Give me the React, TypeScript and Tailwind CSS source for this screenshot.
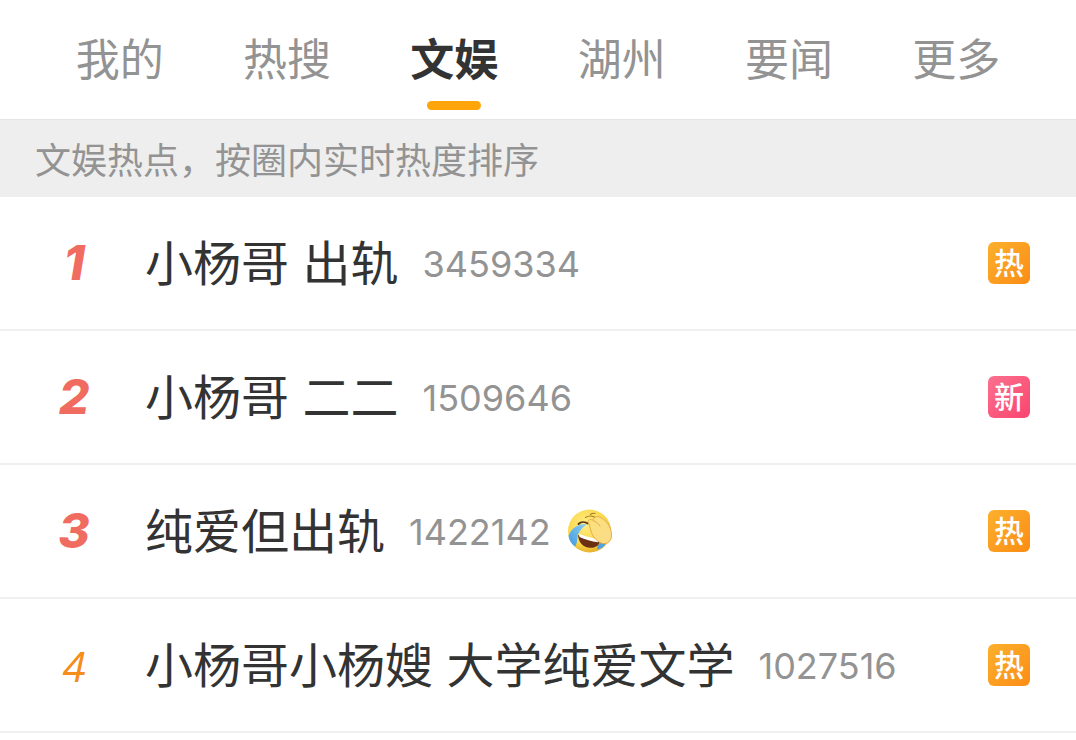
import { useState } from 'react'
import clsx from 'clsx'

type Tag = '热' | '新'

interface HotItem {
  title: string
  count: number
  tag: Tag
  emoji?: boolean
}

const TABS = ['我的', '热搜', '文娱', '湖州', '要闻', '更多']

const ITEMS: HotItem[] = [
  { title: '小杨哥 出轨', count: 3459334, tag: '热' },
  { title: '小杨哥 二二', count: 1509646, tag: '新' },
  { title: '纯爱但出轨', count: 1422142, tag: '热', emoji: true },
  { title: '小杨哥小杨嫂 大学纯爱文学', count: 1027516, tag: '热' },
]

const TAG_STYLES: Record<Tag, string> = {
  热: 'from-[#fbb02c] to-[#fb8c14]',
  新: 'from-[#fb6f8e] to-[#f9436f]',
}

// Laughing and crying face with a hand over one eye
function FacepalmEmoji() {
  return (
    <svg className="size-[46px] shrink-0" viewBox="0 0 46 46" fill="none" role="img" aria-label="笑cry">
      <defs>
        <radialGradient id="face" cx="0.42" cy="0.35" r="0.65">
          <stop offset="0" stopColor="#ffec85" />
          <stop offset="0.7" stopColor="#fbd84a" />
          <stop offset="1" stopColor="#e9b22e" />
        </radialGradient>
        <linearGradient id="hand" x1="0" y1="0" x2="1" y2="1">
          <stop offset="0" stopColor="#fde07a" />
          <stop offset="1" stopColor="#f9dc88" />
        </linearGradient>
        <linearGradient id="tear" x1="1" y1="0" x2="0" y2="1">
          <stop offset="0" stopColor="#8fd0f5" />
          <stop offset="1" stopColor="#3f9ade" />
        </linearGradient>
      </defs>
      <circle cx="22.500" cy="23" r="21.500" fill="url(#face)" />
      <path d="M11.500 16c2.500-2.500 6.500-2.500 9.500-.5" stroke="#5b3410" strokeWidth="1.800" strokeLinecap="round" />
      <path d="M11 27c7 2.500 15 4 22.500 4.500-.5 5.500-4.500 8.500-10.500 8.300-6.500-.3-11.500-5-12-12.800Z" fill="#6b2f12" />
      <path d="M12 26c6 2 13 4 19.500 5.500l-.5 2.800c-6.500-.8-13-2.800-18.500-5.300Z" fill="#fff" />
      <path d="M20 16c-8-.6-15.500 3.500-18.500 12 .6 4 2.800 7.500 6.500 10.500 3-3.500 1.500-9 3.500-13 1.800-3.500 4.500-6.500 8.500-9.500Z" fill="url(#tear)" />
      <path d="M30 41.500c0-4 2.500-6.500 6-7.500l2.500 2c-1.500 3-4.500 5-8.500 5.500Z" fill="#4da3e3" />
      <path
        d="M21.500 15c-1.500-2.500 1-4.300 4-3 1.500-3.500 5.500-4.500 9-2C40.500 13.500 45 20.500 44.500 28c-.3 5-3.500 8-8 7.500-5.500-.6-10-5.500-12-11-1.200-3.500-1.500-6.500-3-9.500Z"
        fill="url(#hand)"
        stroke="#e3ad4a"
        strokeWidth="1"
      />
      <path d="M18.500 9.500c3-2 6-2 9-.5M23.500 6.500c1.500-1.200 3-1.500 4.500-1" stroke="#a8792c" strokeWidth="1.100" strokeLinecap="round" />
      <path d="M26 12.500c3 1 5.500 3 7 5.500" stroke="#e3ad4a" strokeWidth="1" strokeLinecap="round" />
    </svg>
  )
}

function HotRow({ item, rank }: { item: HotItem; rank: number }) {
  return (
    <li className="border-b-2 border-[#f0f0f0]">
      <a href="#" className="flex h-[132px] items-center pr-[46px] pl-10">
        <span
          className={clsx(
            'w-[68px] shrink-0 text-center italic',
            rank <= 3
              ? 'font-[Inter,sans-serif] text-[48px] font-extrabold text-[#f06c60]'
              : 'font-["Open_Sans",sans-serif] text-[42px] text-[#f68c1a]'
          )}
        >
          {rank}
        </span>
        <span className="ml-[37px] pt-0.5 text-[48px] whitespace-nowrap text-[#333]">{item.title}</span>
        <span className="ml-6 pt-0.5 text-[36px] text-[#939393]">{item.count}</span>
        {item.emoji && (
          <span className="ml-4">
            <FacepalmEmoji />
          </span>
        )}
        <span
          className={clsx(
            'ml-auto flex size-[42px] shrink-0 items-center justify-center rounded-md bg-linear-to-br text-[30px] leading-none font-medium text-white',
            TAG_STYLES[item.tag]
          )}
        >
          {item.tag}
        </span>
      </a>
    </li>
  )
}

export default function App() {
  const [active, setActive] = useState('文娱')

  return (
    <main className="min-h-screen bg-white font-[Inter,'Noto_Sans_CJK_SC',sans-serif]">
      <nav className="grid grid-cols-6 border-b border-[#e6e6e6] px-9">
        {TABS.map((tab) => (
          <button
            key={tab}
            type="button"
            onClick={() => setActive(tab)}
            className={clsx(
              'flex h-[119px] flex-col items-center pt-7 text-[44px] leading-[64px]',
              tab === active ? 'font-bold text-[#333]' : 'text-[#939393]'
            )}
          >
            {tab}
            {tab === active && <span className="mt-[9px] h-[9px] w-[54px] rounded-full bg-[#fea50b]" />}
          </button>
        ))}
      </nav>
      <p className="bg-[#eee] px-[35px] pt-[5px] text-[36px] leading-[72px] text-[#939393]">文娱热点，按圈内实时热度排序</p>
      <ol>
        {ITEMS.map((item, i) => (
          <HotRow key={item.title} item={item} rank={i + 1} />
        ))}
      </ol>
    </main>
  )
}
